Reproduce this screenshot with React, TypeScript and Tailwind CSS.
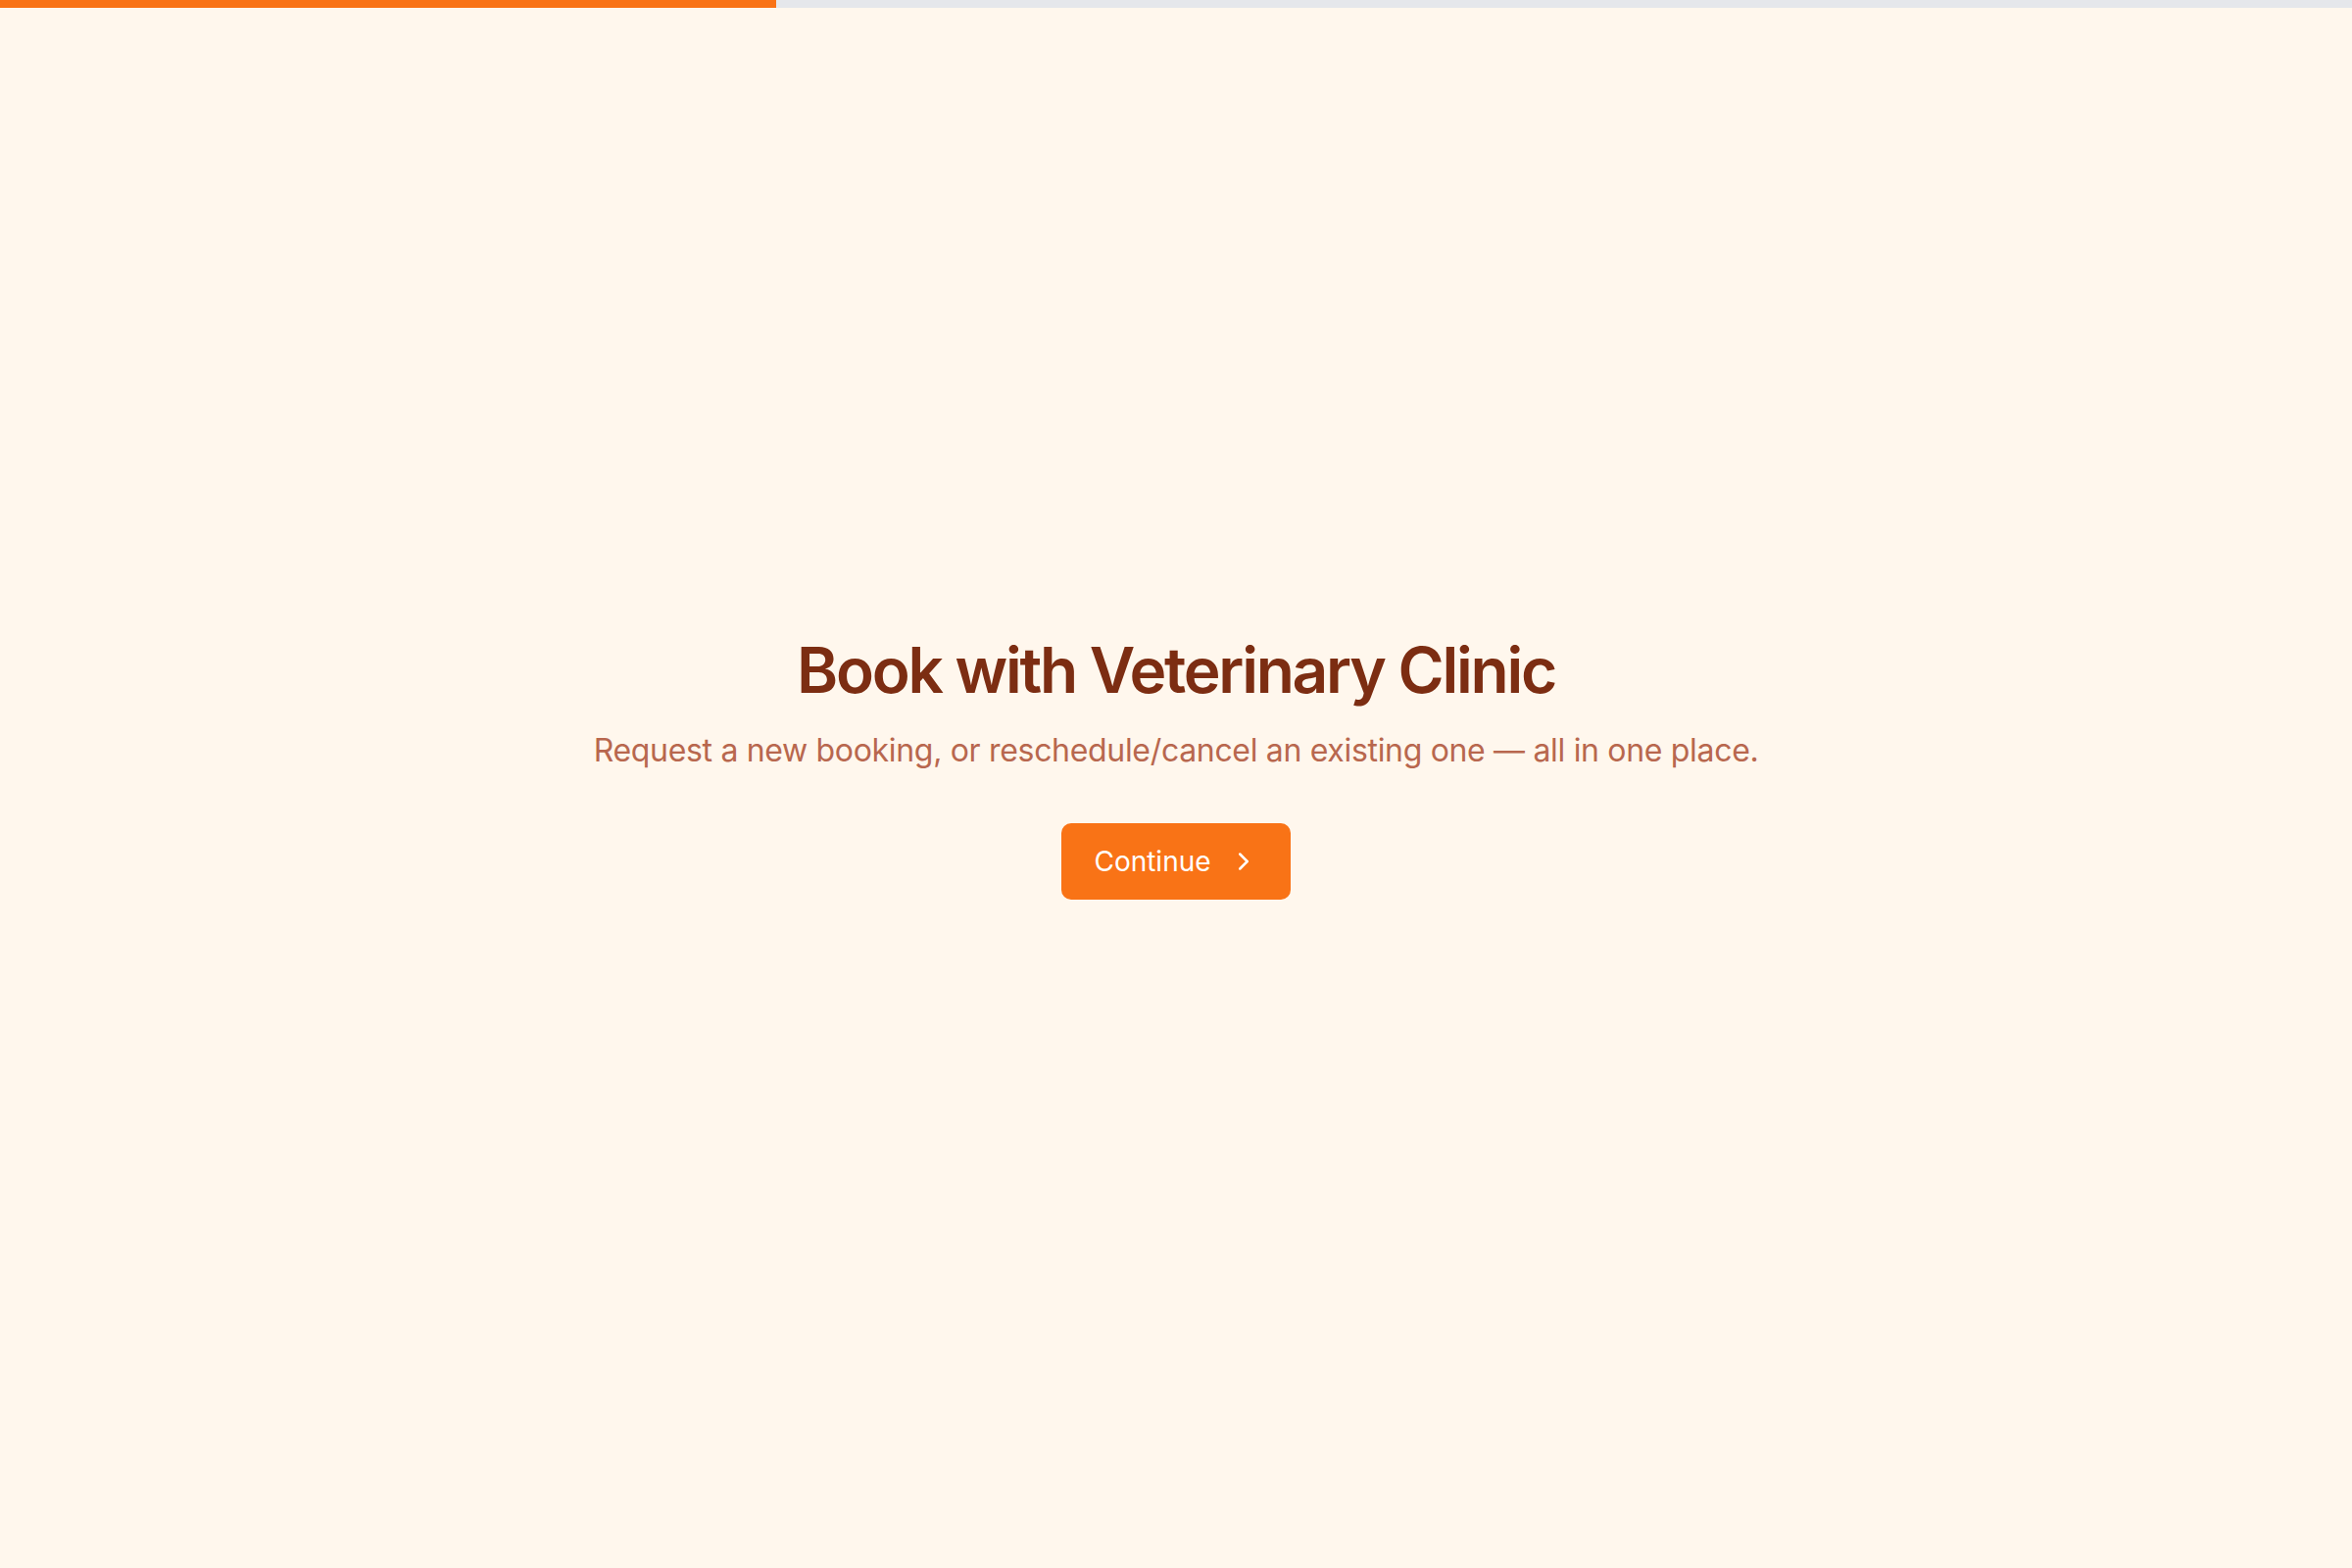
import { ChevronRight } from 'lucide-react';

export default function App() {
  return (
    <div className="min-h-screen bg-[#fff7ed] flex flex-col" style={{ fontFamily: 'Inter, "Noto Sans", sans-serif' }}>
      {/* progress */}
      <div className="h-[8px] w-full bg-[#e5e7eb]">
        <div className="h-full w-[33%] bg-[#f97316]" />
      </div>

      <main className="flex-1 flex flex-col items-center justify-center pb-[41px]">
        <h1 className="text-[64px] leading-[1.1] font-semibold text-[#7c2d12] tracking-[-0.035em]">
          Book with Veterinary Clinic
        </h1>
        <p className="mt-[25px] text-[32px] leading-[1.4] text-[#b8674e] tracking-[-0.01em]">
          Request a new booking, or reschedule/cancel an existing one — all in one place.
        </p>
        <button className="mt-[51px] h-[78px] px-[33px] rounded-[10px] bg-[#f97316] text-white text-[28px] flex items-center gap-[18px]">
          Continue
          <ChevronRight className="w-[30px] h-[30px]" strokeWidth={2} />
        </button>
      </main>
    </div>
  );
}
